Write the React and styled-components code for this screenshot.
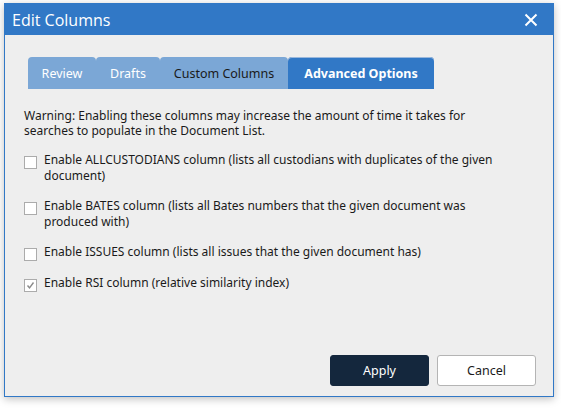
import { useState } from 'react';
import styled, { createGlobalStyle } from 'styled-components';

const Global = createGlobalStyle`
    html, body {
        margin: 0;
        background: #ffffff;
    }
    body {
        font-family: "Noto Sans", "DejaVu Sans", sans-serif;
    }
`;

const Page = styled.div`
    width: 561px;
    height: 408px;
    padding: 3px 0 0 4px;
    box-sizing: border-box;
`;

const Dialog = styled.div`
    width: 550px;
    height: 394px;
    box-sizing: border-box;
    border: 1px solid #3178c6;
    background: #eeeeee;
    box-shadow: 0 2px 8px rgba(0, 0, 0, .25);
    display: flex;
    flex-direction: column;
`;

const TitleBar = styled.div`
    height: 31px;
    background: #3178c6;
    color: #ffffff;
    display: flex;
    align-items: center;
    justify-content: space-between;
    padding: 0 15px 0 7px;
    font-family: "Open Sans", "Noto Sans", sans-serif;
    font-size: 16px;
`;

const Close = styled.button`
    background: none;
    border: none;
    padding: 0;
    width: 14px;
    height: 14px;
    cursor: pointer;
    display: flex;
`;

const Body = styled.div`
    flex: 1;
    padding: 22px 0 0 19px;
    display: flex;
    flex-direction: column;
`;

const Tabs = styled.div`
    display: flex;
    margin-left: 4px;
    height: 32px;
`;

const Tab = styled.div`
    width: ${p => p.w}px;
    background: ${p => p.active ? '#3178c6' : '#7ba7d6'};
    color: ${p => p.active || !p.dark ? '#ffffff' : '#1a1a1a'};
    font-weight: ${p => p.active ? 'bold' : 'normal'};
    font-size: 12.5px;
    border-radius: 4px 4px 0 0;
    display: flex;
    align-items: center;
    justify-content: center;
    box-shadow: ${p => p.active ? 'inset 0 1px 0 #9ab8dc' : 'none'};
`;

const Warning = styled.p`
    margin: 19px 0 14px;
    font-size: 12px;
    line-height: 15px;
    color: #1a1a1a;
    width: 480px;
`;

const Option = styled.label`
    display: flex;
    align-items: flex-start;
    gap: 7px;
    font-size: 12px;
    line-height: 16px;
    color: #1a1a1a;
    margin-bottom: 14px;
    width: 486px;
`;

const Box = styled.span`
    flex: none;
    width: 11px;
    height: 11px;
    margin-top: 4px;
    border: 1px solid #ababab;
    background: #ffffff;
    display: flex;
    align-items: center;
    justify-content: center;
`;

const Footer = styled.div`
    margin-top: auto;
    display: flex;
    justify-content: flex-end;
    gap: 8px;
    padding: 0 17px 10px 0;
`;

const Button = styled.button`
    width: 99px;
    height: 31px;
    border-radius: 3px;
    font-family: "Noto Sans", sans-serif;
    font-size: 12.5px;
    cursor: pointer;
    background: ${p => p.primary ? '#14273d' : '#ffffff'};
    color: ${p => p.primary ? '#ffffff' : '#1a1a1a'};
    border: 1px solid ${p => p.primary ? '#14273d' : '#b4b4b4'};
`;

const options = [
    { text: 'Enable ALLCUSTODIANS column (lists all custodians with duplicates of the given document)', on: false },
    { text: 'Enable BATES column (lists all Bates numbers that the given document was produced with)', on: false },
    { text: 'Enable ISSUES column (lists all issues that the given document has)', on: false },
    { text: 'Enable RSI column (relative similarity index)', on: true },
];

const App = () => {
    const [checks, setChecks] = useState(options.map(o => o.on));

    const toggle = (i) => {
        setChecks(checks.map((c, j) => j === i ? !c : c));
    };

    return (
        <Page>
            <Global />
            <Dialog>
                <TitleBar>
                    <span>Edit Columns</span>
                    <Close>
                        <svg width="14" height="14" viewBox="0 0 14 14">
                            <path d="M1.5 1.5L12.5 12.5M12.5 1.5L1.5 12.5" stroke="#fff" strokeWidth="2" />
                        </svg>
                    </Close>
                </TitleBar>
                <Body>
                    <Tabs>
                        <Tab w={68}>Review</Tab>
                        <Tab w={64}>Drafts</Tab>
                        <Tab w={128} dark>Custom Columns</Tab>
                        <Tab w={146} active>Advanced Options</Tab>
                    </Tabs>
                    <Warning>
                        Warning: Enabling these columns may increase the amount of time it takes for searches to populate in the Document List.
                    </Warning>
                    {options.map((o, i) => (
                        <Option key={i} onClick={() => toggle(i)}>
                            <Box>
                                {checks[i] && (
                                    <svg width="9" height="9" viewBox="0 0 9 9">
                                        <path d="M1.5 4.5L3.5 6.8L7.5 1.5" stroke="#8a8a8a" strokeWidth="1.4" fill="none" />
                                    </svg>
                                )}
                            </Box>
                            <span>{o.text}</span>
                        </Option>
                    ))}
                    <Footer>
                        <Button primary>Apply</Button>
                        <Button>Cancel</Button>
                    </Footer>
                </Body>
            </Dialog>
        </Page>
    );
};

export default App;
